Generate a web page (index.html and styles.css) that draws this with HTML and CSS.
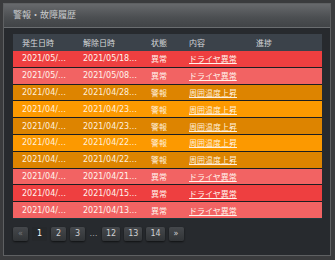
FILE: index.html
```html
<!DOCTYPE html>
<html lang="ja">
<head>
  <meta charset="UTF-8">
  <title>警報・故障履歴</title>
  <link rel="stylesheet" href="styles.css">
</head>
<body>

<div class="panel">
  <div class="panel-title">警報・故障履歴</div>
  <div class="panel-body">
    <table class="history">
      <colgroup>
        <col class="c-start"><col class="c-end"><col class="c-state"><col class="c-text"><col class="c-prog">
      </colgroup>
      <thead>
        <tr><th>発生日時</th><th>解除日時</th><th>状態</th><th>内容</th><th>進捗</th></tr>
      </thead>
      <tbody>
        <tr class="fault"><td>2021/05/…</td><td>2021/05/18…</td><td>異常</td><td><a href="#">ドライヤ異常</a></td><td></td></tr>
        <tr class="fault"><td>2021/05/…</td><td>2021/05/08…</td><td>異常</td><td><a href="#">ドライヤ異常</a></td><td></td></tr>
        <tr class="alarm"><td>2021/04/…</td><td>2021/04/28…</td><td>警報</td><td><a href="#">周囲温度上昇</a></td><td></td></tr>
        <tr class="alarm"><td>2021/04/…</td><td>2021/04/23…</td><td>警報</td><td><a href="#">周囲温度上昇</a></td><td></td></tr>
        <tr class="alarm"><td>2021/04/…</td><td>2021/04/23…</td><td>警報</td><td><a href="#">周囲温度上昇</a></td><td></td></tr>
        <tr class="alarm"><td>2021/04/…</td><td>2021/04/22…</td><td>警報</td><td><a href="#">周囲温度上昇</a></td><td></td></tr>
        <tr class="alarm"><td>2021/04/…</td><td>2021/04/22…</td><td>警報</td><td><a href="#">周囲温度上昇</a></td><td></td></tr>
        <tr class="fault"><td>2021/04/…</td><td>2021/04/21…</td><td>異常</td><td><a href="#">ドライヤ異常</a></td><td></td></tr>
        <tr class="fault"><td>2021/04/…</td><td>2021/04/15…</td><td>異常</td><td><a href="#">ドライヤ異常</a></td><td></td></tr>
        <tr class="fault"><td>2021/04/…</td><td>2021/04/13…</td><td>異常</td><td><a href="#">ドライヤ異常</a></td><td></td></tr>
      </tbody>
    </table>

    <div class="pager">
      <span class="page disabled">«</span>
      <span class="page active">1</span>
      <span class="page">2</span>
      <span class="page">3</span>
      <span class="dots">…</span>
      <span class="page">12</span>
      <span class="page">13</span>
      <span class="page">14</span>
      <span class="page">»</span>
    </div>
  </div>
</div>

</body>
</html>
```

FILE: styles.css
```css
body {
  margin: 0;
  background-color: #3a3b3d;
  font-family: "DejaVu Sans", "Noto Sans CJK JP", sans-serif;
  font-size: 8px;
}

.panel {
  margin: 3px 0 0 3px;
  width: 326px;
  height: 251px;
  border: 1px solid #5e6062;
  background-color: #272a2e;
}

.panel-title {
  height: 23px;
  line-height: 22px;
  padding-left: 9px;
  font-family: "Noto Sans CJK JP", sans-serif;
  font-size: 9px;
  color: #c9cbcd;
  background: linear-gradient(#67696c, #4b4e51 60%, #414447);
  border-bottom: 1px solid #6a6d70;
}

.panel-body {
  padding: 6px 8px 0 9px;
}

.history {
  width: 309px;
  border-collapse: collapse;
  table-layout: fixed;
}

.c-start { width: 62px; }
.c-end { width: 68px; }
.c-state { width: 38px; }
.c-text { width: 67px; }
.c-prog { width: 74px; }

.history th, .history td {
  padding: 0 2px 0 8px;
  text-align: left;
  white-space: nowrap;
  overflow: hidden;
  font-weight: normal;
}

.history th:first-child, .history td:first-child {
  padding-left: 9px;
}

.history th {
  height: 17px;
  background-color: #3b424a;
  color: #d6d8da;
  font-family: "Noto Sans CJK JP", sans-serif;
}

.history td {
  height: 15.8px;
  border-bottom: 1px solid rgba(0, 0, 0, 0.28);
  color: #fff4ec;
}

.history td:nth-child(3), .history td a {
  font-family: "Noto Sans CJK JP", sans-serif;
}

.history a {
  color: inherit;
  text-decoration: underline;
}

.fault:nth-child(odd) td { background-color: #ee3f40; }
.fault:nth-child(even) td { background-color: #f26363; }
.alarm:nth-child(odd) td { background-color: #dd8400; }
.alarm:nth-child(even) td { background-color: #fc9900; }

.alarm td { color: #fff0dc; }

.history tbody tr:last-child td {
  border-bottom: 1px solid #1d3a3e;
}

.pager {
  display: flex;
  align-items: center;
  gap: 4px;
  margin-top: 8px;
}

.page {
  min-width: 15px;
  height: 14px;
  line-height: 14px;
  padding: 0 4px;
  box-sizing: border-box;
  text-align: center;
  color: #cfd1d3;
  border-radius: 2px;
  background: linear-gradient(#45484c, #313437);
  box-shadow: 0 1px 2px rgba(0, 0, 0, 0.6);
}

.page.active {
  background: #25282b;
  color: #ffffff;
  box-shadow: none;
}

.page.disabled {
  color: #76797c;
}

.dots {
  width: 9px;
  text-align: center;
  color: #a9abad;
}
```
